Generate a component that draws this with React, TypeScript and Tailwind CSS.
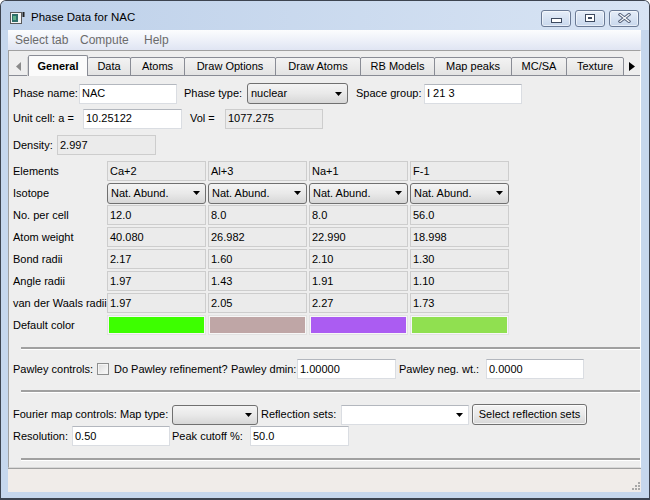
import React from "react";

function Arrow({ color = "#000" }: { color?: string }) {
  return (
    <svg width="7" height="4" viewBox="0 0 7 4" className="shrink-0">
      <path d="M0 0H7L3.5 4Z" fill={color} />
    </svg>
  );
}

function TextBox({ w, value }: { w: string; value: string }) {
  return (
    <div
      className={`${w} h-[20px] shrink-0 bg-white border border-[#dadde2] border-t-[#b3b7be] pl-[2px] flex items-center whitespace-nowrap overflow-hidden`}
    >
      {value}
    </div>
  );
}

function ReadBox({ w, value, h }: { w: string; value: string; h?: string }) {
  return (
    <div
      className={`${w} ${h ?? "h-[20px]"} shrink-0 bg-[#ebebeb] border border-[#cdcdcd] pl-[2px] flex items-center whitespace-nowrap overflow-hidden`}
    >
      {value}
    </div>
  );
}

function Combo({ w, value, h }: { w: string; value: string; h?: string }) {
  return (
    <div
      className={`${w} ${h ?? "h-[21px]"} shrink-0 rounded-[3px] border border-[#707070] bg-linear-to-b from-[#f4f4f4] via-[#e9e9e9] to-[#d7d7d7] flex items-center pl-[3px] pr-[5px] whitespace-nowrap`}
    >
      <span className="flex-1 overflow-hidden">{value}</span>
      <Arrow />
    </div>
  );
}

function Sep() {
  return <div className="ml-[8px] h-[3px] shrink-0 border-t-2 border-t-[#a0a0a0] border-b border-b-white" />;
}

const tabs: { label: string; w: string; sel?: boolean }[] = [
  { label: "General", w: "w-[60px]", sel: true },
  { label: "Data", w: "w-[43px]" },
  { label: "Atoms", w: "w-[55px]" },
  { label: "Draw Options", w: "w-[92px]" },
  { label: "Draw Atoms", w: "w-[86px]" },
  { label: "RB Models", w: "w-[75px]" },
  { label: "Map peaks", w: "w-[78px]" },
  { label: "MC/SA", w: "w-[56px]" },
  { label: "Texture", w: "w-[58px]" },
];

const elements = ["Ca+2", "Al+3", "Na+1", "F-1"];
const rows: { label: string; vals: string[] }[] = [
  { label: "No. per cell", vals: ["12.0", "8.0", "8.0", "56.0"] },
  { label: "Atom weight", vals: ["40.080", "26.982", "22.990", "18.998"] },
  { label: "Bond radii", vals: ["2.17", "1.60", "2.10", "1.30"] },
  { label: "Angle radii", vals: ["1.97", "1.43", "1.91", "1.10"] },
  { label: "van der Waals radii", vals: ["1.97", "2.05", "2.27", "1.73"] },
];
const colors = ["bg-[#3dff00]", "bg-[#bfa6a6]", "bg-[#ab5cf2]", "bg-[#90e050]"];

function WinBtn({ children }: { children: React.ReactNode }) {
  return (
    <div className="w-[30px] h-[17px] rounded-[3px] border border-[#6a7a95] bg-linear-to-b from-[#e6eef9] to-[#c8d7ec] shadow-[inset_0_0_0_1px_rgba(255,255,255,0.55)] flex items-center justify-center">
      {children}
    </div>
  );
}

export default function App() {
  return (
    <div className="w-[650px] h-[500px] font-['Liberation_Sans',Arial,sans-serif] text-[11px] text-black bg-[#c6d7ed] border border-[#3d4450] border-b-2 rounded-t-[6px] flex flex-col overflow-hidden">
      {/* Title bar */}
      <div className="h-[29px] shrink-0 flex items-center pt-[5px] bg-linear-to-r from-[#bdd0e9] to-[#d8e4f4]">
        <svg width="15" height="12" viewBox="0 0 15 12" className="ml-[9px] shrink-0">
          <rect x="0.5" y="0.5" width="11" height="11" fill="#f4f4f4" stroke="#5a5a5a" />
          <rect x="2" y="2" width="6" height="8" fill="#2f6f6a" />
          <rect x="3" y="4" width="3" height="4" fill="#5fb08a" />
          <rect x="12.5" y="0" width="2" height="5" fill="#222" />
        </svg>
        <span className="ml-[6px] text-[11.5px] text-black">Phase Data for NAC</span>
        <div className="ml-auto mr-[10px] flex gap-[4px]">
          <WinBtn>
            <svg width="11" height="6" viewBox="0 0 11 6" className="mt-[5px]">
              <rect x="0.5" y="0.5" width="10" height="4" fill="#fff" stroke="#3d4a60" />
            </svg>
          </WinBtn>
          <WinBtn>
            <svg width="10" height="8" viewBox="0 0 10 8">
              <rect x="0.5" y="0.5" width="9" height="7" fill="#fff" stroke="#3d4a60" />
              <rect x="3" y="3" width="4" height="2" fill="#3d4a60" />
            </svg>
          </WinBtn>
          <WinBtn>
            <svg width="13" height="10" viewBox="0 0 13 10">
              <path d="M2 1.5L11 8.5M11 1.5L2 8.5" stroke="#5b6880" strokeWidth="3.2" strokeLinecap="square" />
              <path d="M2 1.5L11 8.5M11 1.5L2 8.5" stroke="#ffffff" strokeWidth="1.2" strokeLinecap="square" />
            </svg>
          </WinBtn>
        </div>
      </div>

      {/* Frame */}
      <div className="flex-1 flex flex-col pl-[7px] pr-[8px] pb-[6px]">
        <div className="flex-1 flex flex-col bg-[#eeeeee]">
          {/* Menu */}
          <div className="h-[20px] shrink-0 flex items-center pl-[7px] text-[12px] text-[#6b6b6b] bg-linear-to-b from-[#fcfdfe] to-[#e0e5f3]">
            <span className="w-[65px]">Select tab</span>
            <span className="w-[64px]">Compute</span>
            <span>Help</span>
          </div>

          {/* Notebook */}
          <div className="h-[418px] shrink-0 flex flex-col border border-l-[#a0a0a0] border-t-[#a0a0a0] border-r-white border-b-[#d8d8d8]">
            <div className="h-[25px] shrink-0 -mb-px relative z-10 flex items-end">
              <div className="w-[19px] h-[19px] shrink-0 flex items-center justify-center border-r border-[#d4d4d4]">
                <svg width="5" height="9" viewBox="0 0 5 9">
                  <path d="M5 0V9L0 4.5Z" fill="#8a8a8a" />
                </svg>
              </div>
              {tabs.map((t, i) =>
                t.sel ? (
                  <div
                    key={t.label}
                    className={`${t.w} h-[21px] shrink-0 flex items-center justify-center font-bold border border-b-0 border-[#898c95] bg-[#fbfbfb] rounded-t-[2px] z-20`}
                  >
                    {t.label}
                  </div>
                ) : (
                  <div
                    key={t.label}
                    className={`${t.w} h-[19px] shrink-0 -ml-px flex items-center justify-center border border-[#898c95] bg-linear-to-b from-[#f3f3f3] to-[#e3e3e3] rounded-t-[2px] ${i === 1 ? "border-l-0 ml-0" : ""}`}
                  >
                    {t.label}
                  </div>
                )
              )}
              <div className="ml-auto w-[17px] h-[19px] shrink-0 flex items-center justify-center pr-[2px]">
                <svg width="6" height="9" viewBox="0 0 6 9">
                  <path d="M0 0V9L6 4.5Z" fill="#000" />
                </svg>
              </div>
            </div>

            {/* Page */}
            <div className="flex-1 flex flex-col border-t border-[#898c95] bg-[#eeeeee] pl-[4px] pt-[7px]">
              {/* Row 1 */}
              <div className="h-[21px] flex items-center">
                <span className="w-[66px] shrink-0">Phase name:</span>
                <TextBox w="w-[98px]" value="NAC" />
                <span className="ml-[7px] w-[63px] shrink-0">Phase type:</span>
                <Combo w="w-[101px]" value="nuclear" />
                <span className="ml-[8px] w-[68px] shrink-0 whitespace-nowrap">Space group:</span>
                <TextBox w="w-[98px]" value="I 21 3" />
              </div>
              {/* Row 2 */}
              <div className="mt-[4px] h-[21px] flex items-center">
                <span className="w-[70px] shrink-0 whitespace-nowrap">Unit cell: a =</span>
                <TextBox w="w-[99px]" value="10.25122" />
                <span className="ml-[8px] w-[35px] shrink-0">Vol =</span>
                <ReadBox w="w-[98px]" value="1077.275" />
              </div>
              {/* Row 3 */}
              <div className="mt-[6px] h-[20px] flex items-center">
                <span className="w-[44px] shrink-0">Density:</span>
                <ReadBox w="w-[99px]" value="2.997" />
              </div>

              {/* Grid */}
              <div className="mt-[6px] flex flex-col gap-[2px]">
                <div className="h-[20px] flex items-center gap-[2px]">
                  <span className="w-[92px] shrink-0 whitespace-nowrap">Elements</span>
                  {elements.map((e) => (
                    <ReadBox key={e} w="w-[99px]" value={e} />
                  ))}
                </div>
                <div className="h-[20px] flex items-center gap-[2px]">
                  <span className="w-[92px] shrink-0">Isotope</span>
                  {elements.map((e) => (
                    <Combo key={e} w="w-[99px]" h="h-[21px]" value="Nat. Abund." />
                  ))}
                </div>
                {rows.map((r) => (
                  <div key={r.label} className="h-[20px] flex items-center gap-[2px]">
                    <span className="w-[92px] shrink-0 whitespace-nowrap">{r.label}</span>
                    {r.vals.map((v, i) => (
                      <ReadBox key={i} w="w-[99px]" value={v} />
                    ))}
                  </div>
                ))}
                <div className="h-[20px] flex items-center gap-[2px]">
                  <span className="w-[92px] shrink-0 whitespace-nowrap">Default color</span>
                  {colors.map((c, i) => (
                    <div key={i} className="w-[99px] h-[20px] shrink-0 border border-[#e2e2e2] bg-[#f7f7f7] p-px">
                      <div className={`w-full h-full ${c}`} />
                    </div>
                  ))}
                </div>
              </div>

              <div className="mt-[12px]">
                <Sep />
              </div>

              {/* Pawley */}
              <div className="mt-[9px] h-[20px] flex items-center">
                <span className="w-[84px] shrink-0 whitespace-nowrap">Pawley controls:</span>
                <div className="w-[12px] h-[12px] shrink-0 border border-[#8e8f8f] bg-linear-to-br from-[#dcdcdc] to-[#fbfbfb] shadow-[inset_0_0_0_1px_#f4f4f4]" />
                <span className="ml-[5px] w-[117px] shrink-0 whitespace-nowrap">Do Pawley refinement?</span>
                <span className="w-[66px] shrink-0 whitespace-nowrap">Pawley dmin:</span>
                <TextBox w="w-[99px]" value="1.00000" />
                <span className="ml-[3px] w-[87px] shrink-0 whitespace-nowrap">Pawley neg. wt.:</span>
                <TextBox w="w-[98px]" value="0.0000" />
              </div>

              <div className="mt-[11px]">
                <Sep />
              </div>

              {/* Fourier */}
              <div className="mt-[11px] h-[21px] flex items-center">
                <span className="w-[159px] shrink-0 whitespace-nowrap">Fourier map controls: Map type:</span>
                <Combo w="w-[86px]" h="h-[20px]" value="" />
                <span className="ml-[3px] w-[80px] shrink-0 whitespace-nowrap">Reflection sets:</span>
                <div className="w-[128px] h-[20px] shrink-0 bg-white border border-[#dadde2] border-t-[#b3b7be] flex items-center justify-end pr-[5px]">
                  <Arrow />
                </div>
                <div className="ml-[3px] w-[115px] h-[21px] shrink-0 rounded-[3px] border border-[#707070] bg-linear-to-b from-[#f4f4f4] via-[#e9e9e9] to-[#d7d7d7] shadow-[inset_0_0_0_1px_rgba(255,255,255,0.7)] flex items-center justify-center whitespace-nowrap">
                  Select reflection sets
                </div>
              </div>
              <div className="mt-px h-[20px] flex items-center">
                <span className="w-[59px] shrink-0">Resolution:</span>
                <TextBox w="w-[98px]" value="0.50" />
                <span className="ml-[2px] w-[78px] shrink-0 whitespace-nowrap">Peak cutoff %:</span>
                <TextBox w="w-[99px]" value="50.0" />
              </div>

              <div className="mt-[12px]">
                <Sep />
              </div>
            </div>
          </div>

          {/* Status bar */}
          <div className="h-[24px] shrink-0 border-t border-[#a0a0a0] bg-[#f0ece9] flex items-end justify-end pr-[1px] pb-[2px]">
            <svg width="8" height="8" viewBox="0 0 8 8">
              <rect x="6" y="0" width="2" height="2" fill="#a8a8a8" />
              <rect x="3" y="3" width="2" height="2" fill="#a8a8a8" />
              <rect x="6" y="3" width="2" height="2" fill="#a8a8a8" />
              <rect x="0" y="6" width="2" height="2" fill="#a8a8a8" />
              <rect x="3" y="6" width="2" height="2" fill="#a8a8a8" />
              <rect x="6" y="6" width="2" height="2" fill="#a8a8a8" />
            </svg>
          </div>
        </div>
      </div>
    </div>
  );
}
